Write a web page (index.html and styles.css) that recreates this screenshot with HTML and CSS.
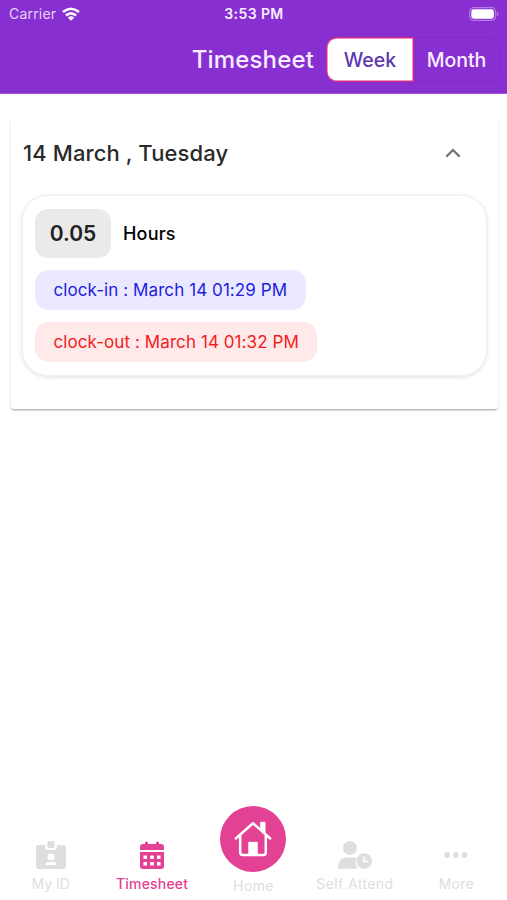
FILE: index.html
```html
<!DOCTYPE html>
<html lang="en">
<head>
<meta charset="utf-8">
<meta name="viewport" content="width=device-width, initial-scale=1">
<title>Timesheet</title>
<link rel="stylesheet" href="styles.css">
</head>
<body>
<div class="app">
  <header class="header">
    <div class="status">
      <div class="carrier"><span class="carrier-name">Carrier</span>
        <svg class="wifi" viewBox="0 0 18 14" fill="none" stroke="currentColor" stroke-width="2.6"><path d="M1 5.1Q9-1.6 17 5.1M3.900 8.500Q9 4.200 14.100 8.500"/><path d="M5.900 10.700Q9 8 12.100 10.700L9 13.800z" fill="currentColor" stroke="none"/></svg>
      </div>
      <span class="clock">3:53 PM</span>
      <svg class="battery" viewBox="0 0 30 14"><rect x=".7" y=".7" width="26" height="12.600" rx="4" fill="none" stroke="#b77be6" stroke-width="1.200"/><rect x="2.300" y="2.300" width="22.600" height="9.400" rx="2.400" fill="#fff"/><path d="M28 5v4q1.600-.7 1.600-2T28 5z" fill="#b77be6"/></svg>
    </div>
    <div class="toolbar">
      <h1 class="title">Timesheet</h1>
      <div class="segments">
        <button class="segment segment-active">Week</button>
        <button class="segment">Month</button>
      </div>
    </div>
  </header>
  <main class="content">
    <section class="day">
      <div class="day-head">
        <h2 class="date">14 March , Tuesday</h2>
        <svg class="chevron" viewBox="0 0 16 10" fill="none" stroke="#757575" stroke-width="2.300"><path d="M1.300 8.600 8 2l6.700 6.600"/></svg>
      </div>
      <div class="entry">
        <div class="total"><span class="amount">0.05</span><span class="unit">Hours</span></div>
        <div class="pill pill-in">clock-in : March 14 01:29 PM</div>
        <div class="pill pill-out">clock-out : March 14 01:32 PM</div>
      </div>
    </section>
  </main>
  <nav class="tabs">
    <a class="tab">
      <svg class="icon icon-id" viewBox="0 0 32 28" fill="#dedede"><path fill-rule="evenodd" d="M4 4h6v2q0 3 3 3h6q3 0 3-3V4h6q3 0 3 3v18q0 3-3 3H4q-3 0-3-3V7q0-3 3-3zm12 8.300a3.500 3.500 0 1 0 0 7 3.500 3.500 0 0 0 0-7zm-3 8.700q-2.500 0-2.500 3h11q0-3-2.500-3z"/><rect x="12.500" y="0" width="7" height="7" rx="1.500"/></svg>
      <span class="label">My ID</span>
    </a>
    <a class="tab tab-active">
      <svg class="icon icon-calendar" viewBox="0 0 26 28"><path fill="#e34194" fill-rule="evenodd" d="M1 9V6q0-3 3-3h2V2q0-1.600 1.500-1.600T9 2v1h8V2q0-1.600 1.500-1.600T20 2v1h2q3 0 3 3v3zM1 11h24v14q0 3-3 3H4q-3 0-3-3zm3.500 3.500v3.500h3.500v-3.500zm6.700 0v3.500h3.600v-3.500zm6.800 0v3.500h3.500v-3.500zM4.500 21v3.500h3.500V21zm6.700 0v3.500h3.600V21zm6.800 0v3.500h3.500V21z"/></svg>
      <span class="label label-time">Timesheet</span>
    </a>
    <a class="tab tab-home">
      <span class="home-circle"><svg class="icon-home" viewBox="0 0 38 36" fill="none" stroke="#fff" stroke-width="2.500" stroke-linejoin="round" stroke-linecap="round"><path d="M1.800 17.500 19 2.200l17.200 15.300M6.200 14.500v17q0 2.500 2.500 2.500h20.600q2.500 0 2.500-2.500v-17"/><path d="M27 1.300h4v11.500l-4-3.500zM14.800 33.500V21.300h8.400v12.200z" fill="#fff" stroke-width="1"/></svg></span>
      <span class="label label-home">Home</span>
    </a>
    <a class="tab">
      <svg class="icon icon-attend" viewBox="0 0 36 28" fill="#dedede"><circle cx="13" cy="7" r="7"/><path d="M1 27.800q0-11.300 9.500-11.300h6.700q1.300 0 2.500.5-2.800 5.500 1 10.800z"/><circle cx="27.200" cy="20" r="7.800"/><path d="M27 15.500v5h4" fill="none" stroke="#fff" stroke-width="1.500"/></svg>
      <span class="label label-attend">Self Attend</span>
    </a>
    <a class="tab">
      <svg class="icon icon-more" viewBox="0 0 24 28" fill="#dedede"><circle cx="3.200" cy="14" r="2.900"/><circle cx="11.900" cy="14" r="2.900"/><circle cx="20.600" cy="14" r="2.900"/></svg>
      <span class="label label-more">More</span>
    </a>
  </nav>
</div>
</body>
</html>
```

FILE: styles.css
```css
* { box-sizing: border-box; }
body { margin: 0; background: #fff; font-family: Inter, "Liberation Sans", sans-serif; }
.app { height: 900px; display: flex; flex-direction: column; overflow: hidden; }
.header { height: 94px; background: #872fd1; border-bottom: 1px solid #a755e0; color: #f9eeff; flex: none; }
.status { height: 27px; padding: 0 8px 0 9px; display: grid; grid-template-columns: 1fr auto 1fr; align-items: center; font-size: 13px; }
.carrier { display: flex; align-items: center; gap: 6px; }
.wifi { width: 18px; height: 14px; color: #fff; }
.carrier-name { letter-spacing: .2px; color: #ead5f8; font-size: 14px; }
.clock { font-size: 14px; font-weight: 600; letter-spacing: .4px; }
.battery { width: 30px; height: 14px; justify-self: end; }
.toolbar { display: flex; justify-content: flex-end; align-items: center; height: 65px; padding-right: 7px; gap: 12px; }
.title { margin: 0; font-size: 24px; font-weight: 500; letter-spacing: .15px; }
.segments { display: flex; width: 174px; height: 45px; border: 1px solid #7d2bc9; border-radius: 11px; }
.segment { flex: 1; padding: 0; border: 0; background: none; color: #f9eeff; font: 500 19.5px Inter, "Liberation Sans", sans-serif; }
.segment-active { flex: 0 0 88px; margin: -1px 0 -1px -1px; background: #fff; color: #5d37b0; border: 1px solid #d42781; box-shadow: inset 0 0 0 .5px #d42781; border-radius: 11px 0 0 11px; }
.content { flex: 1; padding: 24px 9px 0 11px; }
.day { height: 291px; padding: 0 11px; border-radius: 3px; box-shadow: 0 2px 2px -1px #aaa, 0 1px 3px #0002; clip-path: inset(0 -4px -5px -4px); }
.day-head { height: 77px; display: flex; align-items: center; justify-content: space-between; padding: 0 26px 7px 1px; }
.date { margin: 0; color: #2a2a2a; font-size: 22px; font-weight: 500; letter-spacing: .1px; }
.chevron { width: 16px; height: 10px; }
.entry { height: 181px; border-radius: 26px; border: 1px solid #f0f0f0; padding: 12px; box-shadow: 0 1px 4px #0002; display: flex; flex-direction: column; align-items: flex-start; gap: 12px; }
.total { display: flex; align-items: center; gap: 12px; height: 50px; font-size: 18px; font-weight: 500; letter-spacing: .2px; }
.amount { width: 76px; height: 49px; border-radius: 13px; background: #eaeaea; display: flex; align-items: center; justify-content: center; font-size: 21px; font-weight: 600; letter-spacing: 0; color: #222; }
.pill { height: 40px; border-radius: 14px; display: flex; align-items: center; padding-left: 18.5px; font-size: 17px; letter-spacing: .08px; }
.pill-in { width: 271px; color: #1d1ddd; background: #eae9ff; }
.pill-out { width: 282px; color: #f21c1c; background: #ffe9e9; }
.tabs { height: 104px; display: grid; grid-template-columns: repeat(5, 1fr); align-items: end; padding-bottom: 7px; }
.tab { display: flex; flex-direction: column; align-items: center; gap: 6px; color: #dedede; }
.tab-active { color: #e34194; }
.label { font-size: 14px; line-height: 18px; white-space: nowrap; }
.label-time { font-weight: 500; letter-spacing: .2px; }
.label-home { letter-spacing: .4px; }
.label-attend { letter-spacing: .4px; }
.label-more { letter-spacing: .2px; }
.icon { height: 28px; }
.tab-home { gap: 5px; margin-bottom: -2px; }
.home-circle { width: 66px; height: 66px; border-radius: 50%; background: #e34194; display: flex; align-items: center; justify-content: center; }
.icon-home { width: 38px; height: 36px; }
```
